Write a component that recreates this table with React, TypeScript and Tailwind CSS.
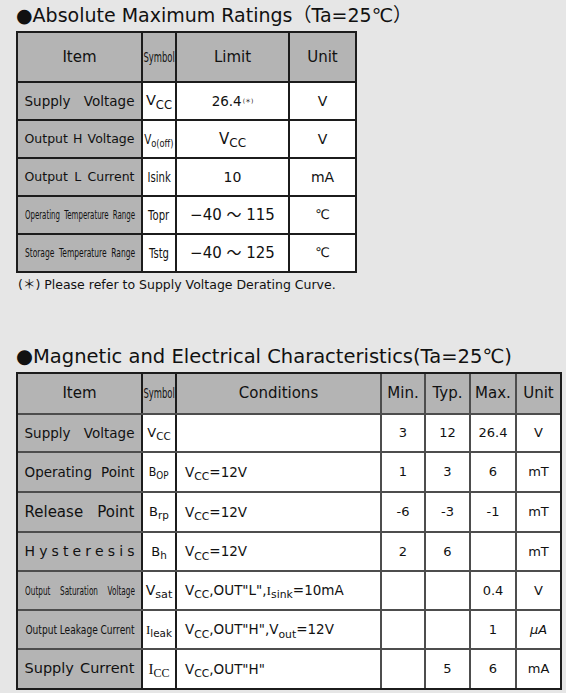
import React from 'react';

const FONT = "font-['DejaVu_Sans','Noto_Sans_CJK_JP',sans-serif]";
const SERIF = "font-['Liberation_Serif','DejaVu_Serif',serif]";

// words pushed to both edges of a fixed box
function Spread({ words, className }: { words: string[]; className: string }) {
  return (
    <div className={`flex shrink-0 justify-between whitespace-nowrap ${className}`}>
      {words.map((w, i) => (
        <span key={i}>{w}</span>
      ))}
    </div>
  );
}

function Sub({ children, className = '' }: { children: React.ReactNode; className?: string }) {
  return <span className={`relative top-[0.3em] text-[0.8em] leading-none ${className}`}>{children}</span>;
}

function Vcc({ className = '' }: { className?: string }) {
  return (
    <span className={className}>
      V<Sub>CC</Sub>
    </span>
  );
}

/* ---------- Absolute Maximum Ratings ---------- */

const T1 = 'border-[#1c1c1c]';

function Row1({
  label,
  symbol,
  limit,
  unit,
  last,
}: {
  label: React.ReactNode;
  symbol: React.ReactNode;
  limit: React.ReactNode;
  unit: React.ReactNode;
  last?: boolean;
}) {
  return (
    <div className={`flex ${last ? 'h-[36px]' : `h-[38px] border-b-2 ${T1}`}`}>
      <div className={`flex w-[125px] shrink-0 items-center justify-center border-r-2 ${T1} bg-[#b4b4b4] text-[13.5px]`}>
        {label}
      </div>
      <div className={`flex w-[34px] shrink-0 items-center justify-center border-r-2 ${T1} bg-white text-[14px]`}>
        {symbol}
      </div>
      <div className={`flex w-[113px] shrink-0 items-center justify-center border-r-2 ${T1} bg-white text-[14px]`}>
        {limit}
      </div>
      <div className="flex w-[65px] shrink-0 items-center justify-center bg-white text-[14px]">{unit}</div>
    </div>
  );
}

function RatingsTable() {
  return (
    <div className={`w-[341px] border-2 ${T1}`}>
      <div className={`flex h-[50px] border-b-2 ${T1} bg-[#b4b4b4] text-[15px]`}>
        <div className={`flex w-[125px] shrink-0 items-center justify-center border-r-2 ${T1}`}>Item</div>
        <div className={`flex w-[34px] shrink-0 items-center justify-center border-r-2 ${T1}`}>
          <span className="inline-block scale-x-[0.6] whitespace-nowrap text-[14px]">Symbol</span>
        </div>
        <div className={`flex w-[113px] shrink-0 items-center justify-center border-r-2 ${T1}`}>Limit</div>
        <div className="flex w-[65px] shrink-0 items-center justify-center">Unit</div>
      </div>
      <Row1
        label={<Spread words={['Supply', 'Voltage']} className="w-[110px]" />}
        symbol={<Vcc className="text-[14.5px]" />}
        limit={
          <span className="text-[13.5px]">
            26.4<span className="relative -top-[0.55em] ml-[1px] text-[6px]">(＊)</span>
          </span>
        }
        unit="V"
      />
      <Row1
        label={<Spread words={['Output', 'H', 'Voltage']} className="w-[110px] text-[12.5px]" />}
        symbol={
          <span className="inline-block scale-x-[0.74] whitespace-nowrap text-[14px]">
            V<Sub>o(off)</Sub>
          </span>
        }
        limit={<Vcc className="text-[15px]" />}
        unit="V"
      />
      <Row1
        label={<Spread words={['Output', 'L', 'Current']} className="w-[110px] text-[12.5px]" />}
        symbol={<span className="inline-block scale-x-[0.72] whitespace-nowrap">Isink</span>}
        limit="10"
        unit="mA"
      />
      <Row1
        label={
          <Spread words={['Operating', 'Temperature', 'Range']} className="w-[204px] scale-x-[0.54] text-[13px]" />
        }
        symbol={<span className="inline-block scale-x-[0.72] whitespace-nowrap">Topr</span>}
        limit={<span className="text-[15px] whitespace-nowrap">−40 ～ 115</span>}
        unit={<span className="text-[13px]">℃</span>}
      />
      <Row1
        last
        label={
          <Spread words={['Storage', 'Temperature', 'Range']} className="w-[190px] scale-x-[0.58] text-[13px]" />
        }
        symbol={<span className="inline-block scale-x-[0.72] whitespace-nowrap">Tstg</span>}
        limit={<span className="text-[15px] whitespace-nowrap">−40 ～ 125</span>}
        unit={<span className="text-[13px]">℃</span>}
      />
    </div>
  );
}

/* ---------- Magnetic and Electrical Characteristics ---------- */

const DARK = 'border-[#1c1c1c]';
const GREY = 'border-[#4d4d4d]';

type Row2Props = {
  h: string;
  label: React.ReactNode;
  symbol: React.ReactNode;
  cond?: React.ReactNode;
  min?: string;
  typ?: string;
  max?: string;
  unit: React.ReactNode;
  last?: boolean;
};

function Row2({ h, label, symbol, cond, min, typ, max, unit, last }: Row2Props) {
  return (
    <div className={`flex ${h} ${last ? '' : `border-b-2 ${GREY}`}`}>
      <div className={`flex w-[125px] shrink-0 items-center justify-center border-r-2 ${DARK} bg-[#b4b4b4] text-[13.5px]`}>
        {label}
      </div>
      <div className={`flex w-[34px] shrink-0 items-center justify-center border-r-2 ${DARK} bg-white text-[13.5px]`}>
        {symbol}
      </div>
      <div className={`flex w-[205px] shrink-0 items-center border-r-2 ${GREY} bg-white pl-[8px] text-[13.5px] whitespace-nowrap`}>
        {cond}
      </div>
      <div className={`flex w-[44px] shrink-0 items-center justify-center border-r-2 ${GREY} bg-white text-[13px]`}>{min}</div>
      <div className={`flex w-[45px] shrink-0 items-center justify-center border-r-2 ${GREY} bg-white text-[13px]`}>{typ}</div>
      <div className={`flex w-[46px] shrink-0 items-center justify-center border-r-2 ${GREY} bg-white text-[13px]`}>{max}</div>
      <div className="flex w-[43px] shrink-0 items-center justify-center bg-white text-[13px]">{unit}</div>
    </div>
  );
}

function CharacteristicsTable() {
  const vcc12 = (
    <span>
      <Vcc />
      =12V
    </span>
  );
  return (
    <div className={`w-[546px] border-2 ${DARK}`}>
      <div className={`flex h-[41px] border-b-2 ${GREY} bg-[#b4b4b4] text-[15px]`}>
        <div className={`flex w-[125px] shrink-0 items-center justify-center border-r-2 ${DARK}`}>Item</div>
        <div className={`flex w-[34px] shrink-0 items-center justify-center border-r-2 ${DARK}`}>
          <span className="inline-block scale-x-[0.6] whitespace-nowrap text-[14px]">Symbol</span>
        </div>
        <div className={`flex w-[205px] shrink-0 items-center justify-center border-r-2 ${GREY}`}>Conditions</div>
        <div className={`flex w-[44px] shrink-0 items-center justify-center border-r-2 ${GREY}`}>Min.</div>
        <div className={`flex w-[45px] shrink-0 items-center justify-center border-r-2 ${GREY}`}>Typ.</div>
        <div className={`flex w-[46px] shrink-0 items-center justify-center border-r-2 ${GREY}`}>Max.</div>
        <div className="flex w-[43px] shrink-0 items-center justify-center">Unit</div>
      </div>
      <Row2
        h="h-[38px]"
        label={<Spread words={['Supply', 'Voltage']} className="w-[110px]" />}
        symbol={<Vcc className="text-[13px]" />}
        min="3"
        typ="12"
        max="26.4"
        unit="V"
      />
      <Row2
        h="h-[40px]"
        label={<Spread words={['Operating', 'Point']} className="w-[110px]" />}
        symbol={
          <span className="inline-block scale-x-[0.85] whitespace-nowrap text-[13px]">
            B<Sub>OP</Sub>
          </span>
        }
        cond={vcc12}
        min="1"
        typ="3"
        max="6"
        unit="mT"
      />
      <Row2
        h="h-[40px]"
        label={<Spread words={['Release', 'Point']} className="w-[110px] text-[15px]" />}
        symbol={
          <span className="text-[13px]">
            B<Sub>rp</Sub>
          </span>
        }
        cond={vcc12}
        min="-6"
        typ="-3"
        max="-1"
        unit="mT"
      />
      <Row2
        h="h-[39px]"
        label={<Spread words={'Hysteresis'.split('')} className="w-[110px] text-[14px]" />}
        symbol={
          <span className="text-[13px]">
            B<Sub>h</Sub>
          </span>
        }
        cond={vcc12}
        min="2"
        typ="6"
        unit="mT"
      />
      <Row2
        h="h-[39px]"
        label={
          <Spread words={['Output', 'Saturation', 'Voltage']} className="w-[196px] scale-x-[0.56] text-[13px]" />
        }
        symbol={
          <span className="text-[14px]">
            V<Sub>sat</Sub>
          </span>
        }
        cond={
          <span>
            <Vcc />
            ,OUT"L",<span className={SERIF}>I</span>
            <Sub>sink</Sub>=10mA
          </span>
        }
        max="0.4"
        unit="V"
      />
      <Row2
        h="h-[39px]"
        label={<Spread words={['Output', 'Leakage', 'Current']} className="w-[156px] scale-x-[0.7] text-[13px]" />}
        symbol={
          <span className="text-[13px]">
            <span className={SERIF}>I</span>
            <Sub className="text-[0.7em]">leak</Sub>
          </span>
        }
        cond={
          <span>
            <Vcc />
            ,OUT"H",V<Sub>out</Sub>=12V
          </span>
        }
        max="1"
        unit={<span className="italic">μA</span>}
      />
      <Row2
        h="h-[38px]"
        last
        label={<Spread words={['Supply', 'Current']} className="w-[110px] text-[14.5px]" />}
        symbol={
          <span className={`${SERIF} text-[15px]`}>
            I<Sub>CC</Sub>
          </span>
        }
        cond={
          <span>
            <Vcc />
            ,OUT"H"
          </span>
        }
        typ="5"
        max="6"
        unit="mA"
      />
    </div>
  );
}

export default function App() {
  return (
    <div className={`${FONT} min-h-screen w-[566px] bg-[#e6e6e6] pl-4 text-[#111]`}>
      <div className="flex h-[31px] items-center whitespace-nowrap text-[19px] leading-none">
        ●Absolute Maximum Ratings（Ta=25℃）
      </div>
      <RatingsTable />
      <div className="flex h-[24px] items-center pl-[2px] text-[12.5px] whitespace-nowrap">
        (＊) Please refer to Supply Voltage Derating Curve.
      </div>
      <div className="flex h-[75px] items-end pb-[6px] text-[19.5px] leading-none whitespace-nowrap">
        ●Magnetic and Electrical Characteristics(Ta=25℃)
      </div>
      <CharacteristicsTable />
    </div>
  );
}
